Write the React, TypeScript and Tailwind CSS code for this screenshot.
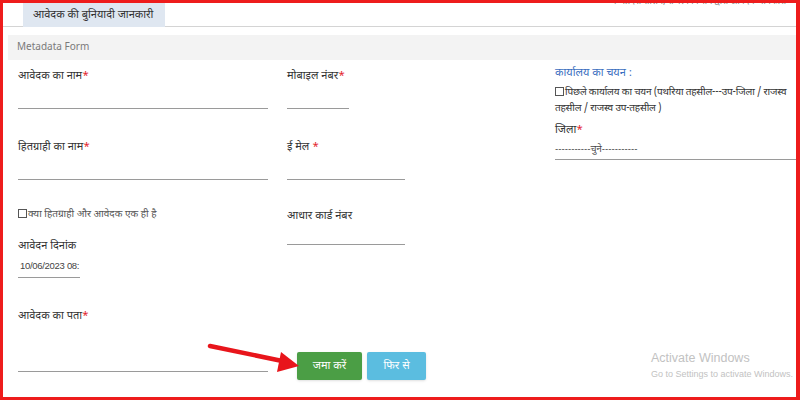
const font = { fontFamily: '"Noto Sans Devanagari", "Lohit Devanagari", "Noto Sans", "Liberation Sans", sans-serif' }

function Label({ text, req, className = '' }: { text: string; req?: boolean; className?: string }) {
  return (
    <div className={`h-[16px] pt-[2px] text-[11px] leading-[16px] text-[#333] ${className}`}>
      {text}
      {req && <span className="text-[#e3262c]">*</span>}
    </div>
  )
}

function Line({ w, h }: { w: string; h: string }) {
  return <div className={`${w} ${h} border-b border-[#9a9a9a]`} />
}

function Box() {
  return <span className="mr-[1px] inline-block h-[9px] w-[9px] border border-[#555] bg-white align-[-1px]" />
}

export default function App() {
  return (
    <div
      className="relative h-[400px] w-[800px] overflow-hidden border-[3px] border-r-4 border-[#ee1c1c] bg-white"
      style={font}
    >
      <div className="absolute right-[10px] top-[-7px] whitespace-nowrap text-[9px] text-[#777]">
        मध्यप्रदेश शासन, राजस्व विभाग द्वारा आवेदन जानकारी
      </div>

      {/* tab bar */}
      <div className="flex h-[24px] border-b border-[#d4d4d4]">
        <div className="ml-[20px] flex h-[24px] w-[142px] items-center bg-[#dfe7f1] pl-[10px] text-[11px] text-[#333]">
          आवेदक की बुनियादी जानकारी
        </div>
      </div>

      <div className="ml-[5px] mt-[8px] flex h-[25px] items-center bg-[#f3f3f3] pl-[9px] text-[10px] text-[#7a7a7a]">
        Metadata Form
      </div>

      <div className="flex pl-[15px]">
        {/* column 1 */}
        <div className="w-[250px] pt-[6px]">
          <Label text="आवेदक का नाम" req />
          <Line w="w-[250px]" h="h-[27px]" />
          <Label text="हितग्राही का नाम" req className="mt-[28px]" />
          <Line w="w-[250px]" h="h-[27px]" />
          <div className="mt-[26px] h-[16px] pt-[1px] text-[10px] leading-[16px] text-[#555]">
            <Box />
            क्या हितग्राही और आवेदक एक ही है
          </div>
          <Label text="आवेदन दिनांक" className="mt-[14px]" />
          <div
            className="flex h-[26px] w-[62px] items-center overflow-hidden whitespace-nowrap border-b border-[#9a9a9a] pl-[2px] pt-[3px] text-[9.5px] tracking-[-0.3px] text-[#444]"
            style={{ fontFamily: '"Liberation Sans", sans-serif' }}
          >
            10/06/2023 08:
          </div>
          <Label text="आवेदक का पता" req className="mt-[28px]" />
          <Line w="w-[250px]" h="h-[50px]" />
        </div>

        {/* column 2 */}
        <div className="ml-[19px] w-[268px] pt-[6px]">
          <Label text="मोबाइल नंबर" req />
          <Line w="w-[62px]" h="h-[27px]" />
          <Label text="ई मेल " req className="mt-[28px]" />
          <Line w="w-[118px]" h="h-[27px]" />
          <Label text="आधार कार्ड नंबर" className="mt-[26px]" />
          <Line w="w-[118px]" h="h-[23px]" />
          <div className="ml-[10px] mt-[107px] flex gap-[5px]">
            <button className="h-[28px] w-[65px] rounded-[2px] bg-[#4b9e45] text-[11px] text-white shadow-sm">
              जमा करें
            </button>
            <button className="h-[28px] w-[59px] rounded-[2px] bg-[#5bbde0] text-[11px] text-white shadow-sm">
              फिर से
            </button>
          </div>
        </div>

        {/* column 3 */}
        <div className="flex-1 pt-[5px]">
          <div className="h-[16px] text-[11px] leading-[16px] text-[#3c6fc0]">कार्यालय का चयन :</div>
          <div className="mt-[4px] whitespace-nowrap text-[10px] leading-[16px] tracking-[-0.2px] text-[#333]">
            <Box />
            पिछले कार्यालय का चयन (पथरिया तहसील---उप-जिला / राजस्व
            <br />
            तहसील / राजस्व उप-तहसील )
          </div>
          <Label text="जिला" req className="mt-[3px]" />
          <div className="mt-[6px] h-[18px] border-b border-[#9a9a9a] text-[9.5px] leading-[16px] text-[#444]">
            -----------चुने-----------
          </div>
        </div>
      </div>

      {/* red arrow */}
      <svg className="absolute left-[200px] top-[335px]" width="105" height="40" viewBox="0 0 105 40">
        <line x1="7" y1="8" x2="84" y2="24" stroke="#e8151b" strokeWidth="4.5" strokeLinecap="round" />
        <polygon points="96,28 78,14 74,34" fill="#e8151b" />
      </svg>

      <div
        className="absolute left-[648px] top-[346px] whitespace-nowrap text-[#c2c2c2]"
        style={{ fontFamily: '"Liberation Sans", sans-serif' }}
      >
        <div className="text-[12.5px] leading-[18px]">Activate Windows</div>
        <div className="text-[9px] leading-[14px]">Go to Settings to activate Windows.</div>
      </div>
    </div>
  )
}
